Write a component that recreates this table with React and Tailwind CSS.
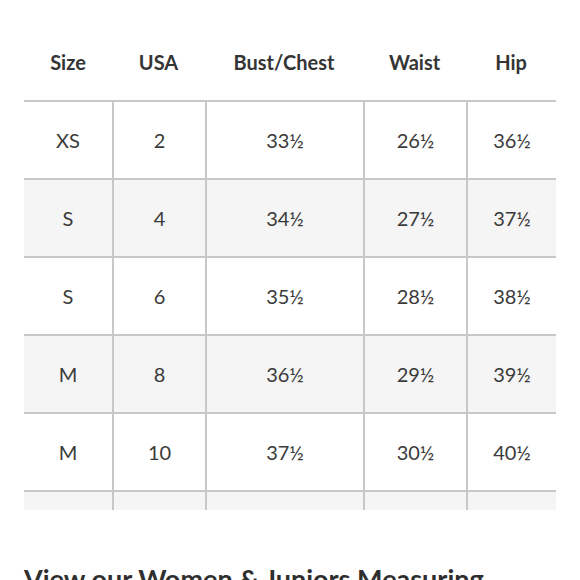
const rows = [
  ["XS", "2", "33½", "26½", "36½"],
  ["S", "4", "34½", "27½", "37½"],
  ["S", "6", "35½", "28½", "38½"],
  ["M", "8", "36½", "29½", "39½"],
  ["M", "10", "37½", "30½", "40½"],
  ["", "", "", "", ""],
];

const headers = ["Size", "USA", "Bust/Chest", "Waist", "Hip"];
const cols = "grid grid-cols-[88px_93px_158px_103px_90px]";

export default function App() {
  return (
    <div className="w-[580px] h-[580px] bg-white overflow-hidden font-['Lato',_'Liberation_Sans',_sans-serif] text-[#3a3a3a]">
      <div className="px-6 pt-6">
        <div className="h-[486px] overflow-hidden">
          <div className={`${cols} h-[76px] items-center text-center text-[20px] font-bold text-[#353535]`}>
            {headers.map((h) => (
              <div key={h}>{h}</div>
            ))}
          </div>

          {rows.map((row, i) => (
            <div
              key={i}
              className={`${cols} h-[78px] border-t-2 border-[#c8c8c8] ${i % 2 === 1 ? "bg-[#f5f5f5]" : "bg-white"}`}
            >
              {row.map((cell, j) => (
                <div
                  key={j}
                  className={`flex items-center justify-center text-[20px] ${j > 0 ? "border-l-2 border-[#c8c8c8]" : ""}`}
                >
                  {cell}
                </div>
              ))}
            </div>
          ))}
        </div>

        <h2 className="mt-[52px] w-[470px] text-[27px] font-bold text-[#2f2f2f] leading-tight">
          View our Women &amp; Juniors Measuring Guide
        </h2>
      </div>
    </div>
  );
}
